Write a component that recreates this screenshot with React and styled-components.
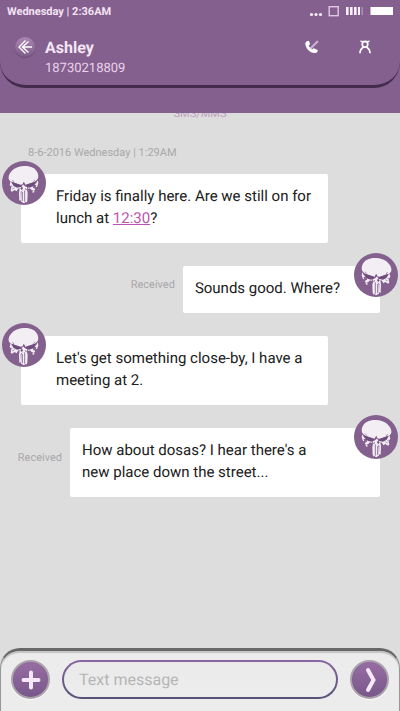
import React from 'react';
import styled, { createGlobalStyle } from 'styled-components';

const GlobalStyle = createGlobalStyle`
  *, *::before, *::after { box-sizing: border-box; }
  body { margin: 0; background: #dddddd; font-family: Roboto, sans-serif; text-rendering: geometricPrecision; }
  button, input { font: inherit; text-rendering: inherit; }
  h1, p { margin: 0; }
`;

const Screen = styled.div`
  display: flex;
  flex-direction: column;
  min-height: 100vh;
  background: #dddddd;
`;

const TopArea = styled.header`
  padding-bottom: 25px;
  background: #84608e;
`;

const HeaderPanel = styled.div`
  border-bottom: 3px solid #432b4e;
  border-radius: 0 0 26px 26px;
`;

const StatusBar = styled.div`
  display: flex;
  align-items: center;
  justify-content: space-between;
  height: 22px;
  padding: 0 7px;
  color: #f3e3f4;
  font-size: 11px;
  font-weight: 700;
`;

const ContactBar = styled.div`
  display: flex;
  align-items: flex-start;
  padding: 15px 25px 6px 15px;
`;

const IconButton = styled.button`
  display: flex;
  align-items: center;
  justify-content: center;
  width: 20px;
  height: 20px;
  padding: 0;
  border: 0;
  background: none;
  color: #ffffff;
  cursor: pointer;
`;

const BackButton = styled(IconButton)`
  border-radius: 50%;
  background: linear-gradient(#aa86b4, #7d5c88);
  box-shadow: 0 1px 1px #654771;
`;

const Contact = styled.div`
  flex: 1;
  margin-left: 10px;
`;

const ContactName = styled.h1`
  color: #f5e7f6;
  font-size: 16px;
  font-weight: 700;
  line-height: 22px;
`;

const ContactNumber = styled.p`
  color: #ead3ec;
  font-size: 13px;
  line-height: 20px;
`;

const Actions = styled.div`
  display: flex;
  gap: 33px;
`;

const Conversation = styled.main`
  flex: 1;
  padding-bottom: 24px;
`;

const Channel = styled.p`
  display: flex;
  align-items: flex-end;
  justify-content: center;
  height: 7px;
  overflow: hidden;
  color: #bda0c1;
  font-size: 11px;
  line-height: 12px;
`;

const DateLine = styled.p`
  padding: 25px 28px 13px;
  color: #a9a8aa;
  font-size: 11px;
  line-height: 16px;
`;

const Messages = styled.div`
  display: flex;
  flex-direction: column;
  gap: 23px;
  padding: 0 20px 0 21px;
`;

const MessageRow = styled.div`
  display: flex;
  align-items: center;
  justify-content: ${(p) => (p.$mine ? 'flex-end' : 'flex-start')};
  gap: 8px;
  margin-left: ${(p) => (p.$mine ? '-21px' : '0')};
`;

const Bubble = styled.div`
  position: relative;
  flex: 0 1 ${(p) => (p.$long ? '310px' : 'auto')};
  max-width: 310px;
  padding: ${(p) => (p.$mine ? '11px 40px 14px 12px' : '11px 6px 14px 35px')};
  border-radius: 2px;
  background: #ffffff;
  color: #202020;
  font-size: 15px;
  line-height: 22px;
`;

const IncomingBubble = styled(Bubble)`
  flex-basis: 307px;
`;

const Avatar = styled.svg`
  position: absolute;
  top: -13px;
  left: ${(p) => (p.$mine ? 'auto' : '-19px')};
  right: ${(p) => (p.$mine ? '-18px' : 'auto')};
  width: 44px;
  height: 44px;
  transform: ${(p) => (p.$mine ? 'scaleX(-1)' : 'none')};
`;

const TimeLink = styled.a`
  color: #bb53b1;
`;

const Receipt = styled.span`
  flex: none;
  padding-bottom: 10px;
  color: #aaa8ab;
  font-size: 11px;
  line-height: 14px;
`;

const Composer = styled.form`
  display: flex;
  align-items: center;
  gap: 12px;
  margin: 0;
  padding: 9px 10px 12px;
  border: 1px solid #999999;
  border-top: 3px solid #686868;
  border-bottom: 0;
  border-radius: 20px 20px 0 0;
  background: #ececec;
  box-shadow: inset 0 2px 1px #c5c5c5;
`;

const RoundButton = styled.button`
  display: flex;
  align-items: center;
  justify-content: center;
  flex: none;
  width: 39px;
  height: 39px;
  padding: 0;
  border: 2px solid #aaa3ac;
  border-radius: 50%;
  background: linear-gradient(#976ea3, #79578b);
  box-shadow: 0 1px 1px #ffffff, inset 0 0 1px #6b5175;
  color: #f6e8f8;
  cursor: pointer;
`;

const MessageInput = styled.input`
  flex: 1;
  min-width: 0;
  height: 39px;
  padding: 0 15px;
  border: 2px solid transparent;
  border-radius: 20px;
  background:
    linear-gradient(#eaeaea, #ededed) padding-box,
    linear-gradient(#8a66a0, #565377) border-box;
  color: #202020;
  font-size: 16px;
  outline: none;

  &::placeholder { color: #b5b5b5; opacity: 1; }
`;

function StatusIcons() {
  return (
    <svg width="84" height="12" viewBox="0 0 84 12" fill="#f9effa" aria-hidden="true">
      <circle cx="2.500" cy="9.500" r="1.600" />
      <circle cx="7" cy="9.500" r="1.600" />
      <circle cx="11.500" cy="9.500" r="1.600" />
      <rect x="20.200" y="1.700" width="9" height="9" fill="none" stroke="#e1c7e5" strokeWidth="1.400" />
      <path d="M37 2h2.600v8H37zM41 2h2.600v8H41zM45 2h2.600v8H45zM49 2h2v8h-2z" />
      <path d="M52.500 2H54v8h-1.500z" opacity=".35" />
      <rect x="61.500" y="2" width="22.500" height="8" fill="#fff" />
    </svg>
  );
}

function BackIcon() {
  return (
    <svg width="16" height="16" viewBox="0 0 16 16" fill="none" stroke="#fff" strokeWidth="1.400" aria-hidden="true">
      <path d="M8.500 1.500 2 8l6.500 6.500M11.500 2.500 5.500 8l6 5.500M6 8h9" />
    </svg>
  );
}

function PhoneIcon() {
  return (
    <svg width="14" height="14" viewBox="0 0 14 14" aria-hidden="true">
      <path d="M13 1 5.500 8.500" stroke="#cdb1d3" strokeWidth="2.200" fill="none" />
      <path d="M1.400 1.500 3 .9c.6-.2 1 .1 1.200.7l.7 1.900c.2.500 0 .9-.4 1.200l-.8.7c.6 1.600 1.900 3.100 3.500 4l.9-.8c.4-.4.8-.4 1.200-.2l2.300 1c.7.3 1.300.7 1.200 1.300-.1.700-.9 1.700-1.700 2.100C6 14.200-.1 8.400.4 3.200c.1-.8.4-1.400 1-1.700z" fill="#fff" />
    </svg>
  );
}

function PersonIcon() {
  return (
    <svg width="12" height="14" viewBox="0 0 12 14" fill="none" stroke="#fff" strokeWidth="1.700" aria-hidden="true">
      <circle cx="6" cy="4.300" r="2.800" />
      <path d="M1.500.8 3.500 2.200M10.500.8l-2 1.400M3.500 1.500h5" strokeWidth="1.400" />
      <path d="M1 13.300c0-3.500 1.600-5.200 3.800-6.300M11 13.300c0-3.500-1.600-5.200-3.800-6.300" />
    </svg>
  );
}

function Skull({ mine }) {
  return (
    <Avatar $mine={mine} viewBox="6 4 132 132" role="img" aria-label="Skull avatar">
      <circle cx="72" cy="70" r="66" fill="#84608f" />
      <g fill="#f3eef4">
        <path d="M72 19C47 20 29 34 26 51c-1 7 1 11 6 14l3 2 27 8 6-1 3-8 3 9 6-1 25-8 8-8c3-6 2-13-1-20C107 25 91 18 72 19z" />
        <path d="m32 64 5 10 13 8 14-1 4 10-6 6 1 25-5 1-1-24 2-14-5 2-4 8-6-4-8 5-4-3 2-10-5-8z" />
        <path d="m65 80 6-6 3 5 8 4-1 8 2 9-1 23-3 6-3-3-3 5-4-1-3-4-3 1 1-28 3-7z" />
        <path d="m84 84 9-1 7-3-1 4 7 4-4 6-7-3-5-5-5 2zM103 75l6-5 4-8 2 9-4 11-4 1 2-7zM99 94l5 1-3 4-5-1z" />
      </g>
      <g fill="#6e4c7b">
        <path d="m36 66 26 11 3 4-14 3-11-6zM108 65 80 76l-4 4 12 3 13-5z" />
        <path d="m69 72 3-5 3 7-2 4z" />
        <path d="m61 86 5-5 3 5-4 5zM75 85l4 2 1 5-3-2z" />
      </g>
      <path d="M67 97v27M74 92v34" fill="none" stroke="#84608f" strokeWidth="2.500" />
      <path d="m30 81 5-2 2 3M37 88l7-4M42 67l-5-6M100 66l5-6" fill="none" stroke="#84608f" strokeWidth="2" />
    </Avatar>
  );
}

function Message({ mine = false, long = false, receipt, children }) {
  const Body = mine ? Bubble : IncomingBubble;
  return (
    <MessageRow $mine={mine}>
      {receipt && <Receipt>{receipt}</Receipt>}
      <Body $mine={mine} $long={long}>
        {children}
        <Skull mine={mine} />
      </Body>
    </MessageRow>
  );
}

export default function App() {
  return (
    <>
      <GlobalStyle />
      <Screen>
        <TopArea>
          <HeaderPanel>
            <StatusBar>
              <span>Wednesday | 2:36AM</span>
              <StatusIcons />
            </StatusBar>
            <ContactBar>
              <BackButton type="button" aria-label="Back"><BackIcon /></BackButton>
              <Contact>
                <ContactName>Ashley</ContactName>
                <ContactNumber>18730218809</ContactNumber>
              </Contact>
              <Actions>
                <IconButton type="button" aria-label="Call"><PhoneIcon /></IconButton>
                <IconButton type="button" aria-label="Contact details"><PersonIcon /></IconButton>
              </Actions>
            </ContactBar>
          </HeaderPanel>
        </TopArea>
        <Conversation>
          <Channel>SMS/MMS</Channel>
          <DateLine>8-6-2016 Wednesday | 1:29AM</DateLine>
          <Messages>
            <Message>
              Friday is finally here. Are we still on for lunch at <TimeLink href="#time">12:30</TimeLink>?
            </Message>
            <Message mine receipt="Received">Sounds good. Where?</Message>
            <Message>Let's get something close-by, I have a meeting at 2.</Message>
            <Message mine long receipt="Received">
              How about dosas? I hear there's a<br />
              new place down the street...
            </Message>
          </Messages>
        </Conversation>
        <Composer onSubmit={(e) => e.preventDefault()}>
          <RoundButton type="button" aria-label="Add attachment">
            <svg width="20" height="20" viewBox="0 0 20 20" fill="none" stroke="currentColor" strokeWidth="4" strokeLinecap="round" aria-hidden="true">
              <path d="M10 2.500v15M2.500 10h15" />
            </svg>
          </RoundButton>
          <MessageInput type="text" placeholder="Text message" aria-label="Text message" />
          <RoundButton type="submit" aria-label="Send">
            <svg width="14" height="26" viewBox="0 0 14 26" fill="none" stroke="currentColor" strokeWidth="4" strokeLinecap="round" strokeLinejoin="miter" aria-hidden="true">
              <path d="m5 3 5.500 10L5 23" />
            </svg>
          </RoundButton>
        </Composer>
      </Screen>
    </>
  );
}
